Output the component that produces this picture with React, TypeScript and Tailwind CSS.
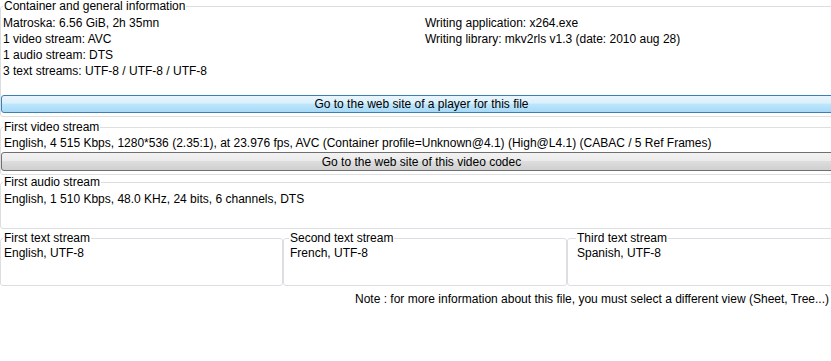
import React from "react";

const font = { fontFamily: '"Liberation Sans", Arial, sans-serif' };

function Group({
  title,
  className,
  legendClass,
  children
}: {
  title: string;
  className?: string;
  legendClass?: string;
  children?: React.ReactNode;
}) {
  return (
    <fieldset
      className={`min-w-0 rounded-[3px] border border-[#dcdfe2] ${className ?? ""}`}
    >
      <legend
        className={`px-[1px] text-[12px] leading-[13px] text-black ${legendClass ?? "ml-[2px]"}`}
      >
        {title}
      </legend>
      {children}
    </fieldset>
  );
}

function BlueButton({ label }: { label: string }) {
  return (
    <button className="mx-[1px] flex h-[18px] w-[calc(100%+6px)] items-center justify-center rounded-[3px] border border-[#3c7fb1] bg-[linear-gradient(#eaf6fd_0%,#d9f0fc_45%,#bee6fd_50%,#a7d9f5_100%)] text-[12px] leading-none text-black">
      {label}
    </button>
  );
}

function GreyButton({ label }: { label: string }) {
  return (
    <button className="mx-[1px] flex h-[19px] w-[calc(100%+6px)] items-center justify-center rounded-[3px] border border-[#707070] bg-[linear-gradient(#f2f2f2_0%,#ebebeb_45%,#dddddd_50%,#cfcfcf_100%)] text-[12px] leading-none text-black">
      {label}
    </button>
  );
}

export default function App() {
  return (
    <div className="h-[361px] w-[831px] overflow-hidden bg-white" style={font}>
      <div className="flex w-[836px] flex-col text-[12px] leading-[16px] text-black">
        <Group title="Container and general information" className="pb-[3px]">
          <div className="flex pt-[2px]">
            <div className="w-[423px] pl-[2px]">
              <div>Matroska: 6.56 GiB, 2h 35mn</div>
              <div>1 video stream: AVC</div>
              <div>1 audio stream: DTS</div>
              <div>3 text streams: UTF-8 / UTF-8 / UTF-8</div>
            </div>
            <div className="flex-1 pl-[1px]">
              <div>Writing application: x264.exe</div>
              <div>Writing library: mkv2rls v1.3 (date: 2010 aug 28)</div>
            </div>
          </div>
          <div className="mt-[16px] -ml-[1px]">
            <BlueButton label="Go to the web site of a player for this file" />
          </div>
        </Group>

        <Group title="First video stream" className="mt-[4px] pb-[3px]">
          <div className="pl-[3px] pt-[1px]">
            English, 4 515 Kbps, 1280*536 (2.35:1), at 23.976 fps, AVC (Container profile=Unknown@4.1) (High@L4.1) (CABAC / 5 Ref Frames)
          </div>
          <div className="mt-[1px] -ml-[1px]">
            <GreyButton label="Go to the web site of this video codec" />
          </div>
        </Group>

        <Group title="First audio stream" className="mt-[1px] h-[53px]">
          <div className="pl-[3px] pt-[2px]">
            English, 1 510 Kbps, 48.0 KHz, 24 bits, 6 channels, DTS
          </div>
        </Group>

        <div className="mt-[3px] flex">
          <Group title="First text stream" className="h-[54px] w-[283px]">
            <div className="pl-[3px]">English, UTF-8</div>
          </Group>
          <Group
            title="Second text stream"
            className="h-[54px] w-[284px]"
            legendClass="ml-[5px]"
          >
            <div className="pl-[6px]">French, UTF-8</div>
          </Group>
          <Group
            title="Third text stream"
            className="h-[54px] flex-1"
            legendClass="ml-[8px]"
          >
            <div className="pl-[9px]">Spanish, UTF-8</div>
          </Group>
        </div>

        <div className="mt-[5px] w-[831px] pr-[2px] text-right">
          Note : for more information about this file, you must select a different view (Sheet, Tree...)
        </div>
      </div>
    </div>
  );
}
